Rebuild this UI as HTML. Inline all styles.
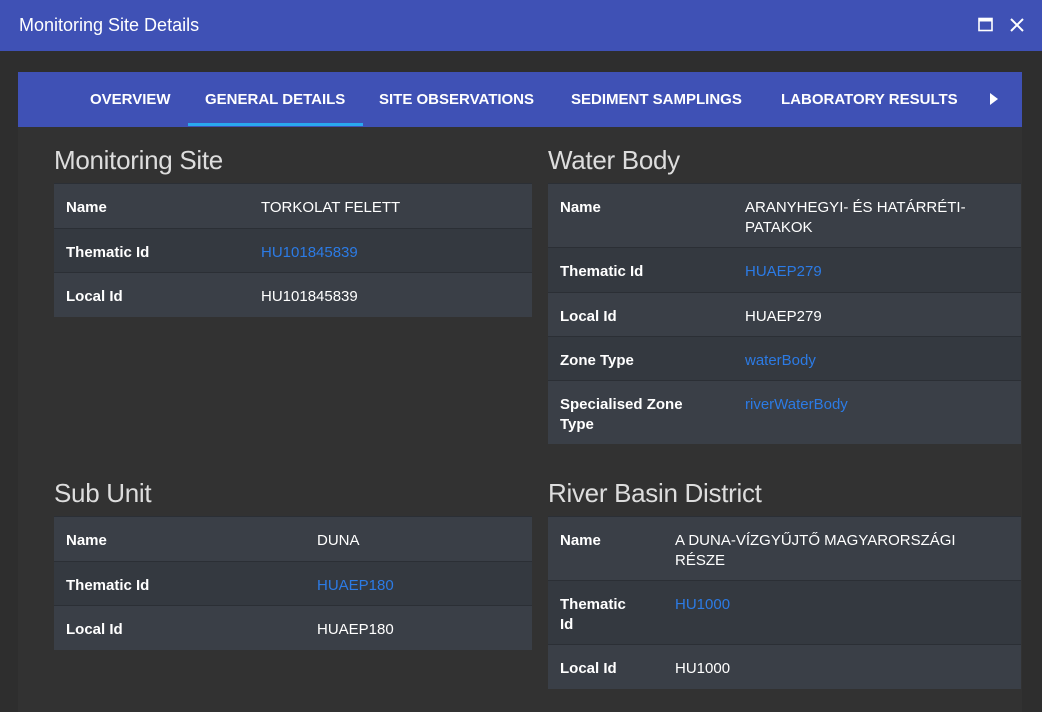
<!DOCTYPE html>
<html><head><meta charset="utf-8"><style>
*{margin:0;padding:0;box-sizing:border-box}
body{width:1042px;height:712px;overflow:hidden;background:#2e2e2e;font-family:"Liberation Sans",Arial,sans-serif;position:relative}
.title{position:absolute;left:0;top:0;width:1042px;height:51px;background:#3f51b5;color:#fff;font-size:18px;line-height:50px;padding-left:19px}
.panel{position:absolute;left:18px;top:72px;width:1004px;height:640px;background:#323232}
.tabs{position:absolute;left:0;top:0;width:1004px;height:55px;background:#3f51b5}
.tab{position:absolute;top:0;height:55px;line-height:55px;color:#fff;font-size:15px;font-weight:bold}
.ul{position:absolute;left:170px;top:51px;width:175px;height:3px;background:#29a8f0}
h2{position:absolute;color:#ddd;font-size:26px;font-weight:normal;letter-spacing:-0.3px}
table{position:absolute;border-collapse:collapse;table-layout:fixed;font-size:15px}
td{color:#fff;padding:0 12px;vertical-align:top;padding-top:14px;border-top:1px solid #2b2f35;line-height:20px}
tr:nth-child(odd) td{background:#3a3f47}
tr:nth-child(even) td{background:#343940}
td:first-child{font-weight:bold}
.l{color:#2c7be5}
</style></head><body>
<div class="title">Monitoring Site Details
<svg style="position:absolute;left:978px;top:17px" width="15" height="15" viewBox="0 0 15 15"><rect x="1" y="1.5" width="13" height="12" fill="none" stroke="#fff" stroke-width="1.6"/><rect x="1" y="1.5" width="13" height="3" fill="#fff"/></svg>
<svg style="position:absolute;left:1010px;top:18px" width="14" height="14" viewBox="0 0 14 14"><path d="M1 1L13 13M13 1L1 13" stroke="#fff" stroke-width="2"/></svg>
</div>
<div class="panel">
<div class="tabs">
<div class="tab" style="left:72px">OVERVIEW</div>
<div class="tab" style="left:187px">GENERAL DETAILS</div>
<div class="tab" style="left:361px">SITE OBSERVATIONS</div>
<div class="tab" style="left:553px">SEDIMENT SAMPLINGS</div>
<div class="tab" style="left:763px">LABORATORY RESULTS</div>
<svg style="position:absolute;left:972px;top:21px" width="8" height="12"><path d="M0 0L8 6L0 12Z" fill="#fff"/></svg>
<div class="ul"></div>
</div>
</div>
<h2 style="left:54px;top:145px">Monitoring Site</h2>
<table style="left:54px;top:183px;width:478px">
<col style="width:195px"><col>
<tr style="height:45px"><td>Name</td><td>TORKOLAT FELETT</td></tr>
<tr style="height:44px"><td>Thematic Id</td><td class="l">HU101845839</td></tr>
<tr style="height:44px"><td>Local Id</td><td>HU101845839</td></tr>
</table>
<h2 style="left:548px;top:145px">Water Body</h2>
<table style="left:548px;top:183px;width:473px">
<col style="width:185px"><col>
<tr style="height:64px"><td>Name</td><td>ARANYHEGYI- ÉS HATÁRRÉTI-PATAKOK</td></tr>
<tr style="height:45px"><td>Thematic Id</td><td class="l">HUAEP279</td></tr>
<tr style="height:44px"><td>Local Id</td><td>HUAEP279</td></tr>
<tr style="height:44px"><td>Zone Type</td><td class="l">waterBody</td></tr>
<tr style="height:63px"><td style="padding-right:30px">Specialised Zone Type</td><td class="l">riverWaterBody</td></tr>
</table>
<h2 style="left:54px;top:478px">Sub Unit</h2>
<table style="left:54px;top:516px;width:478px">
<col style="width:251px"><col>
<tr style="height:45px"><td>Name</td><td>DUNA</td></tr>
<tr style="height:44px"><td>Thematic Id</td><td class="l">HUAEP180</td></tr>
<tr style="height:44px"><td>Local Id</td><td>HUAEP180</td></tr>
</table>
<h2 style="left:548px;top:478px">River Basin District</h2>
<table style="left:548px;top:516px;width:473px">
<col style="width:115px"><col>
<tr style="height:64px"><td>Name</td><td>A DUNA-VÍZGYŰJTŐ MAGYARORSZÁGI RÉSZE</td></tr>
<tr style="height:64px"><td style="padding-right:25px">Thematic Id</td><td class="l">HU1000</td></tr>
<tr style="height:44px"><td>Local Id</td><td>HU1000</td></tr>
</table>
</body></html>
